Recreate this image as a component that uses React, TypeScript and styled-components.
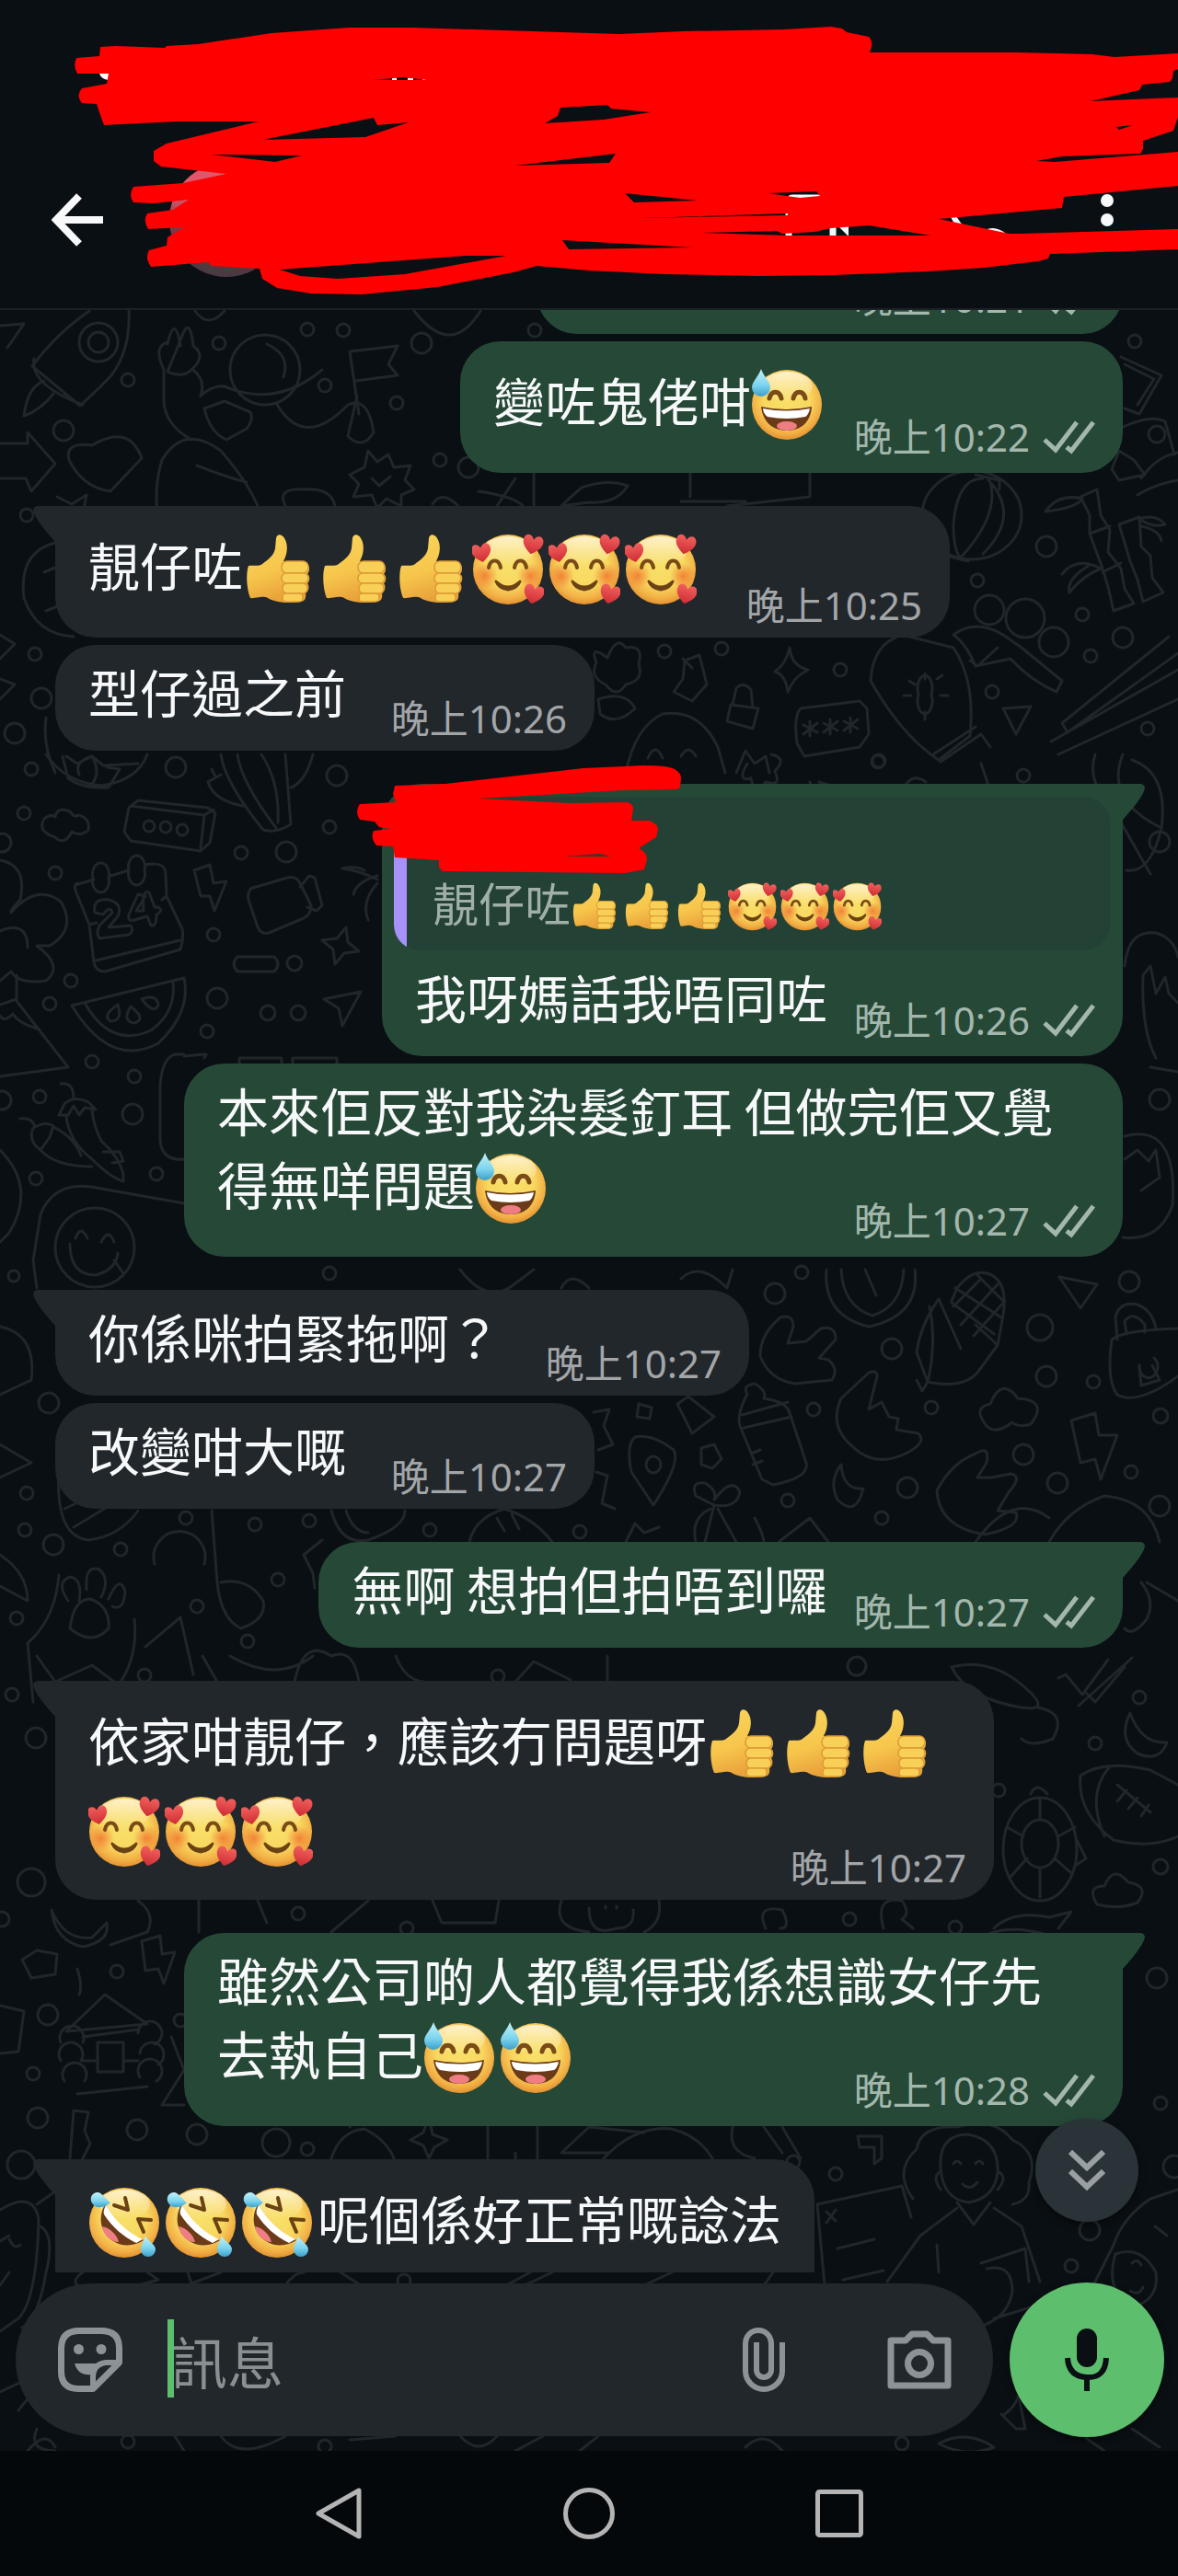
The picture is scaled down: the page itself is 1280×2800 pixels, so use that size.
import React from 'react';
import styled, { createGlobalStyle } from 'styled-components';

const GlobalStyle = createGlobalStyle`
  * { box-sizing: border-box; }
  body { margin: 0; background: #0a0f13; }
  button { border: 0; padding: 0; background: none; color: inherit; display: flex; align-items: center; justify-content: center; }
  svg { display: block; }
`;

const Screen = styled.div`
  height: 100vh;
  display: flex;
  flex-direction: column;
  background: #0a0f13;
  color: #f7f8fa;
  font-family: "Noto Sans CJK TC", "Noto Sans CJK HK", "Noto Sans", sans-serif;
  overflow: hidden;
`;

/* ---------- header ---------- */

const Header = styled.header`
  position: relative;
  flex: none;
  display: flex;
  align-items: center;
  padding: 177px 49px 34px 56px;
  border-bottom: 2px solid #1b2125;
`;

const Avatar = styled.div`
  width: 124px;
  height: 124px;
  margin-left: 72px;
  margin-right: auto;
  border-radius: 50%;
  background: linear-gradient(180deg, #e0566a 0 30%, #8a3a48 50%, #5c3740 75%, #4a3a42 100%);
`;

const HeaderButton = styled.button<{ $gap?: number }>`
  height: 70px;
  margin-left: ${(p) => p.$gap ?? 0}px;
`;

const HeaderScribble = styled.svg`
  position: absolute;
  left: 0;
  top: 0;
  width: 100%;
  height: 335px;
  pointer-events: none;
`;

/* ---------- chat ---------- */

const Chat = styled.main`
  position: relative;
  flex: 1;
  min-height: 0;
  display: flex;
  flex-direction: column;
`;

const Wallpaper = styled.svg`
  position: absolute;
  inset: 0;
  width: 100%;
  height: 100%;
  fill: none;
  stroke: #20262a;
  stroke-width: 3;
  stroke-linecap: round;
  stroke-linejoin: round;
`;

const Viewport = styled.div`
  position: relative;
  flex: 1;
  min-height: 0;
  overflow: hidden;
`;

const MessageList = styled.ol`
  list-style: none;
  margin: -89px 0 0;
  padding: 0 60px;
  display: flex;
  flex-direction: column;
`;

const Bubble = styled.li<{ $out?: boolean; $first?: boolean; $open?: boolean }>`
  position: relative;
  align-self: ${(p) => (p.$out ? 'flex-end' : 'flex-start')};
  max-width: 1020px;
  margin-top: ${(p) => (p.$first ? 36 : 8)}px;
  padding-bottom: ${(p) => (p.$open ? 44 : 0)}px;
  background: ${(p) => (p.$out ? '#264937' : '#22272b')};
  border-radius: ${(p) =>
    !p.$first ? '44px' : p.$out ? '44px 0 44px 44px' : '0 44px 44px 44px'};
  &:first-child { margin-top: 0; }
`;

const Tail = styled.svg<{ $out?: boolean }>`
  position: absolute;
  top: 0;
  ${(p) => (p.$out ? 'left: 100%; margin-left: -1px;' : 'right: 100%; margin-right: -1px; transform: scaleX(-1);')}
  fill: ${(p) => (p.$out ? '#264937' : '#22272b')};
`;

const Body = styled.div`
  display: grid;
  padding: 16px 30px 16px 36px;
`;

const Words = styled.p`
  grid-area: 1 / 1;
  margin: 0 6px 16px 0;
  font-size: 56px;
  line-height: 67px;
`;

/* keeps the last line of text clear of the time stamp */
const Spacer = styled.span<{ $width: number }>`
  display: inline-block;
  height: 1px;
  width: ${(p) => p.$width}px;
`;

const Meta = styled.span<{ $out?: boolean }>`
  grid-area: 1 / 1;
  align-self: end;
  justify-self: end;
  display: flex;
  align-items: center;
  gap: 14px;
  margin-bottom: ${(p) => (p.$out ? 1 : -3)}px;
  font: 42px/44px "Noto Sans", "Noto Sans CJK TC", sans-serif;
  color: ${(p) => (p.$out ? '#a3b7ac' : '#a3a6a9')};
`;

const Quote = styled.blockquote`
  margin: 14px 14px 0 13px;
  height: 167px;
  padding: 84px 28px 0 42px;
  border-radius: 28px;
  background: linear-gradient(to right, #a791fb 14px, #234134 14px);
  font-size: 50px;
  line-height: 60px;
  color: #a0afa7;
`;

const QuoteScribble = styled.svg`
  position: absolute;
  left: -28px;
  top: -20px;
`;

const EmojiBox = styled.span<{ $small?: boolean }>`
  display: inline-flex;
  align-items: center;
  justify-content: flex-start;
  width: ${(p) => (p.$small ? 57 : 83)}px;
  height: ${(p) => (p.$small ? 60 : 95)}px;
  padding-top: ${(p) => (p.$small ? 0 : 10)}px;
  vertical-align: ${(p) => (p.$small ? -10 : -21)}px;
  svg { width: ${(p) => (p.$small ? 53 : 78)}px; height: ${(p) => (p.$small ? 53 : 78)}px; flex: none; }
`;

const ScrollDown = styled.button`
  position: absolute;
  right: 43px;
  bottom: 55px;
  width: 112px;
  height: 112px;
  border-radius: 50%;
  background: #2a3338;
  box-shadow: 0 3px 8px rgba(0, 0, 0, 0.4);
`;

/* ---------- composer ---------- */

const Composer = styled.form`
  position: relative;
  flex: none;
  display: flex;
  align-items: center;
  gap: 18px;
  padding: 11px 15px 15px 17px;
`;

const Field = styled.div`
  position: relative;
  flex: 1;
  min-width: 0;
  height: 166px;
  display: flex;
  align-items: center;
  padding: 0 45px 0 46px;
  border-radius: 83px;
  background: #22272b;
  color: #8c9397;
`;

const Caret = styled.span`
  position: absolute;
  left: 165px;
  top: 39px;
  width: 7px;
  height: 85px;
  background: #5dbf6e;
`;

const TextInput = styled.input`
  flex: 1;
  width: 0;
  min-width: 0;
  height: 90px;
  margin-left: 53px;
  padding: 0;
  border: 0;
  outline: 0;
  background: none;
  color: #f7f8fa;
  font: 61px/88px "Noto Sans CJK TC", sans-serif;
  &::placeholder { color: #8a8f92; opacity: 1; }
`;

const ToolButton = styled.button<{ $gap?: number }>`
  height: 70px;
  margin-left: ${(p) => p.$gap ?? 0}px;
`;

const MicButton = styled.button`
  flex: none;
  width: 168px;
  height: 168px;
  border-radius: 50%;
  background: #5dbf6e;
  box-shadow: 0 3px 8px rgba(0, 0, 0, 0.4);
`;

const SystemNav = styled.nav`
  flex: none;
  height: 136px;
  display: flex;
  align-items: center;
  justify-content: center;
  gap: 216px;
  background: #05080b;
  color: #b4b4b4;
`;

/* ---------- emoji drawings ---------- */

type EmojiName = 'sweat' | 'thumb' | 'love' | 'rofl';

const LABELS: Record<EmojiName, string> = {
  sweat: '😅', thumb: '👍', love: '🥰', rofl: '🤣',
};

const HiddenDefs = styled.svg`
  position: absolute;
`;

const Gradients = () => (
  <HiddenDefs width="0" height="0" aria-hidden="true">
    <defs>
      <radialGradient id="face" cx="50%" cy="42%" r="60%">
        <stop offset="0" stopColor="#f8e06a" />
        <stop offset="0.55" stopColor="#f8d85f" />
        <stop offset="0.82" stopColor="#f2b045" />
        <stop offset="1" stopColor="#e08a2c" />
      </radialGradient>
      <linearGradient id="shine" x1="0" y1="0" x2="0" y2="1">
        <stop offset="0" stopColor="#fff6d8" stopOpacity="0.9" />
        <stop offset="1" stopColor="#fff6d8" stopOpacity="0" />
      </linearGradient>
      <linearGradient id="drop" x1="0" y1="0" x2="0" y2="1">
        <stop offset="0" stopColor="#c4f2fb" />
        <stop offset="0.6" stopColor="#7bd3ee" />
        <stop offset="1" stopColor="#3b9fca" />
      </linearGradient>
      <radialGradient id="blush">
        <stop offset="0" stopColor="#f0702e" stopOpacity="0.8" />
        <stop offset="1" stopColor="#f0702e" stopOpacity="0" />
      </radialGradient>
      <linearGradient id="hand" x1="0" y1="0" x2="0.3" y2="1">
        <stop offset="0" stopColor="#f9d55c" />
        <stop offset="0.6" stopColor="#f7c64c" />
        <stop offset="1" stopColor="#e9a23a" />
      </linearGradient>
      <linearGradient id="heart" x1="0" y1="0" x2="0" y2="1">
        <stop offset="0" stopColor="#f0605c" />
        <stop offset="1" stopColor="#cf2c34" />
      </linearGradient>
    </defs>
  </HiddenDefs>
);

const Face = () => (
  <>
    <circle cx="39" cy="39" r="38" fill="url(#face)" />
    <ellipse cx="39" cy="19" rx="28" ry="16" fill="url(#shine)" />
  </>
);

const Heart = ({ t }: { t: string }) => (
  <path transform={t} d="M0 13C-9 7-14 1-12-6-10-12-3-12 0-5 3-12 10-12 12-6 14 1 9 7 0 13Z" fill="url(#heart)" />
);

const Drawing = ({ name }: { name: EmojiName }) => {
  if (name === 'sweat')
    return (
      <svg viewBox="0 0 78 78">
        <Face />
        <path d="M20 32C22 23 31 23 33 32M46 32C48 23 57 23 59 32" fill="none" stroke="#7a4a17" strokeWidth="5" strokeLinecap="round" />
        <path d="M11 41Q38 47 66 41C65 58 54 67 39 67S13 58 11 41Z" fill="#6b3a18" />
        <path d="M13 43Q38 48 64 43C63 48 61 51 59 52Q39 56 18 52C15 50 13 46 13 43Z" fill="#fff" />
        <ellipse cx="39" cy="62" rx="11" ry="5" fill="#ef7d84" />
        <path d="M11 0C13 7 21 14 21 20A10 10 0 0 1 1 20C1 14 9 7 11 0Z" fill="url(#drop)" />
      </svg>
    );
  if (name === 'love')
    return (
      <svg viewBox="0 0 78 78">
        <Face />
        <circle cx="14" cy="46" r="14" fill="url(#blush)" />
        <circle cx="63" cy="46" r="14" fill="url(#blush)" />
        <path d="M18 37C20 27 29 27 31 37M46 37C48 27 57 27 59 37" fill="none" stroke="#7a4a17" strokeWidth="4" strokeLinecap="round" />
        <path d="M26 52Q39 64 52 52Q49 60 39 61Q29 60 26 52Z" fill="#6b4213" stroke="#6b4213" strokeWidth="3" strokeLinejoin="round" />
        <Heart t="translate(10 20) rotate(-10) scale(.85)" />
        <Heart t="translate(66 11) rotate(12) scale(.88)" />
        <Heart t="translate(67 65) rotate(14) scale(.88)" />
      </svg>
    );
  if (name === 'rofl')
    return (
      <svg viewBox="0 0 78 78">
        <Face />
        <path d="M28 20 43 25 40 12M68 36 54 35 60 49" fill="none" stroke="#6b4213" strokeWidth="4" strokeLinejoin="round" strokeLinecap="round" />
        <path d="M18 19C9 36 15 51 27 59 38 66 51 64 60 58 44 52 30 41 18 19Z" fill="#6b3a18" />
        <path d="M19 20C17 24 16 27 17 30 26 44 38 54 52 61L59 57C45 51 29 38 19 20Z" fill="#fff" />
        <path d="M15 43C23 44 31 52 33 60 24 60 16 52 15 43Z" fill="#ef7d84" />
        <path d="M24 17C18 23 9 24 5 19 0 13 4 6 10 6 15 6 18 13 24 17Z" fill="url(#drop)" />
        <path d="M62 53C64 59 73 62 73 68A8 8 0 0 1 57 68C57 62 61 59 62 53Z" fill="url(#drop)" />
      </svg>
    );
  return (
    <svg viewBox="-4 -1 78 78">
      <path d="M2 34C8 33 13 35 17 32 24 27 30 22 31 15L32 4C33-1 38-1 41 4 45 10 45 20 40 29L60 29C70 31 69 40 66 43 70 46 68 52 66 53 69 57 67 62 64 64 65 69 63 73 58 73 45 75 31 74 23 69 16 66 10 70 4 69 0 60-1 42 2 34Z" fill="url(#hand)" />
      <g fill="#f8d057" stroke="#dc9a35" strokeWidth="1.5">
        <rect x="38" y="29" width="29" height="13" rx="6" />
        <rect x="38" y="42" width="29" height="11" rx="5" />
        <rect x="39" y="53" width="27" height="11" rx="5" />
        <rect x="39" y="64" width="22" height="9" rx="4" />
      </g>
    </svg>
  );
};

const Emoji = ({ name, small }: { name: EmojiName; small?: boolean }) => (
  <EmojiBox $small={small} role="img" aria-label={LABELS[name]}>
    <Drawing name={name} />
  </EmojiBox>
);

/* ---------- messages ---------- */

type Part = string | [EmojiName, number];

interface Message {
  out?: boolean;
  first?: boolean;
  quote?: Part[];
  parts: Part[];
  time?: string;
  space?: number;
}

const MESSAGES: Message[] = [
  { out: true, parts: [], time: '晚上10:21', space: 565 },
  { out: true, parts: ['變咗鬼佬咁', ['sweat', 1]], time: '晚上10:22' },
  { first: true, parts: ['靚仔咗', ['thumb', 3], ['love', 3]], time: '晚上10:25' },
  { parts: ['型仔過之前'], time: '晚上10:26' },
  { out: true, first: true, quote: ['靚仔咗', ['thumb', 3], ['love', 3]], parts: ['我呀媽話我唔同咗'], time: '晚上10:26' },
  { out: true, parts: ['本來佢反對我染髮釘耳 但做完佢又覺得無咩問題', ['sweat', 1]], time: '晚上10:27' },
  { first: true, parts: ['你係咪拍緊拖啊？'], time: '晚上10:27' },
  { parts: ['改變咁大嘅'], time: '晚上10:27' },
  { out: true, first: true, parts: ['無啊 想拍但拍唔到囉'], time: '晚上10:27' },
  { first: true, parts: ['依家咁靚仔，應該冇問題呀', ['thumb', 3], ['love', 3]], time: '晚上10:27' },
  { out: true, first: true, parts: ['雖然公司啲人都覺得我係想識女仔先去執自己', ['sweat', 2]], time: '晚上10:28' },
  { first: true, parts: [['rofl', 3], '呢個係好正常嘅諗法'] },
];

const Parts = ({ parts, small }: { parts: Part[]; small?: boolean }) => (
  <>
    {parts.map((part, i) =>
      typeof part === 'string' ? (
        <React.Fragment key={i}>{part}</React.Fragment>
      ) : (
        Array.from({ length: part[1] }, (_, n) => <Emoji key={`${i}-${n}`} name={part[0]} small={small} />)
      ),
    )}
  </>
);

const Ticks = () => (
  <svg width="57" height="38" viewBox="0 0 57 38" fill="none" stroke="currentColor" strokeWidth="5">
    <path d="M2 22 14 33 37 3M26 30 31 34 55 3" />
  </svg>
);

const MessageItem = ({ m }: { m: Message }) => (
  <Bubble $out={m.out} $first={m.first} $open={!m.time}>
    {m.first && (
      <Tail $out={m.out} width="26" height="39" viewBox="0 0 26 39">
        <path d="M0 0H20Q27 1 24 8Q20 18 1 39H0Z" />
      </Tail>
    )}
    {m.quote && (
      <Quote>
        <Parts parts={m.quote} small />
      </Quote>
    )}
    <Body>
      <Words>
        <Parts parts={m.parts} />
        {m.time && <Spacer $width={m.space ?? (m.out ? 285 : 234)} />}
      </Words>
      {m.time && (
        <Meta $out={m.out}>
          <time>{m.time}</time>
          {m.out && <Ticks />}
        </Meta>
      )}
    </Body>
    {m.quote && (
      <QuoteScribble width="353" height="118" viewBox="387 832 353 118" aria-hidden="true">
        <path
          fill="#fe0000"
          fillRule="evenodd"
          d="M429 854 484 852 634 835 700 832Q725 832 733 836 740 840 740 846L739 856 735 858 676 859 520 868 619 873 682 872Q688 874 688 879L686 892 706 892Q715 896 715 902L713 910 694 922Q703 926 703 934L700 945 679 949 481 947 477 943V935L429 932 427 920 409 919Q402 911 406 903L424 901 412 899 407 893 391 891Q385 882 391 874L430 872 427 863ZM613 931 652 928 664 931Z"
        />
      </QuoteScribble>
    )}
  </Bubble>
);

/* ---------- wallpaper ---------- */

const DOTS: [number, number, number][] = [
  [334, 358, 7], [373, 359, 7], [581, 359, 7], [238, 373, 7], [458, 373, 11], [139, 413, 7], [353, 419, 7], [431, 438, 7],
  [69, 468, 11], [478, 500, 7], [509, 508, 11], [1233, 371, 7], [1257, 472, 9], [1137, 594, 11], [1062, 631, 7], [1075, 663, 16],
  [1114, 672, 21], [1145, 698, 16], [1176, 668, 7], [1220, 693, 11], [1185, 713, 7], [38, 711, 7], [45, 759, 11], [16, 797, 11],
  [722, 708, 7], [784, 705, 7], [913, 728, 7], [1078, 752, 7], [1247, 792, 7], [955, 827, 7], [29, 560, 7],
  [34, 836, 7], [191, 834, 11], [26, 884, 7], [262, 927, 7], [311, 926, 11], [358, 899, 7], [366, 843, 11], [60, 949, 7],
  [232, 1016, 7], [320, 1047, 8], [77, 1066, 7], [54, 1091, 7], [236, 1085, 11], [291, 1101, 8], [324, 1101, 8], [225, 1121, 7],
  [100, 1154, 7], [146, 1170, 7], [43, 1192, 7], [144, 1211, 11], [39, 1281, 7], [170, 1276, 7], [2, 916, 10], [2, 1196, 10],
  [1260, 915, 11], [1260, 1195, 11], [954, 828, 7], [1112, 843, 7],
  [842, 1406, 11], [1130, 1443, 14], [969, 1466, 11], [1137, 1496, 11], [1188, 1502, 7], [1227, 1393, 11], [53, 1525, 11],
  [884, 1532, 7], [1012, 1530, 7], [1261, 1539, 8], [1112, 1581, 11], [986, 1617, 11], [1149, 1612, 11], [1229, 1600, 7],
  [856, 1631, 7], [958, 1650, 7], [1260, 1637, 11], [202, 1650, 7], [277, 1657, 7], [336, 1653, 7], [467, 1663, 7], [630, 1665, 7],
  [29, 1623, 7], [27, 1663, 7], [58, 1679, 11], [131, 1684, 7], [302, 1717, 7], [214, 1746, 7], [18, 1759, 7], [269, 1784, 7],
  [358, 1384, 7], [15, 1387, 6], [871, 1383, 7],
  [13, 1842, 7], [157, 1821, 7], [541, 1822, 7], [931, 1811, 10], [1238, 1845, 7], [39, 1889, 11], [1190, 1895, 7], [1085, 1946, 7],
  [1261, 2029, 8], [34, 2046, 15], [324, 2080, 7], [442, 2096, 7], [923, 2086, 7], [1038, 2095, 7], [2, 2086, 8], [127, 2143, 7],
  [52, 2190, 11], [36, 2254, 7], [41, 2302, 11], [149, 2315, 11], [214, 2320, 11], [1257, 2150, 11], [1261, 2286, 7], [334, 2336, 7],
  [300, 2329, 15], [196, 2196, 7], [23, 2353, 15], [862, 2350, 7], [908, 2363, 7], [1184, 2424, 11], [1164, 2463, 7], [439, 2479, 7],
  [1276, 2355, 12], [139, 2654, 7], [353, 2659, 7], [980, 2656, 7],
];

const DOODLES: string[] = [
  // rocket, cube, astronaut hand and helmet
  'M97 338Q62 362 35 398L87 441Q110 420 121 408Q142 380 140 338M37 390Q32 418 90 440M48 414Q30 420 26 452Q44 446 58 428M128 372A21 21 0 1 1 86 372A21 21 0 1 1 128 372M118 372A11 11 0 1 1 96 372A11 11 0 1 1 118 372',
  'M0 354 26 352 8 378M212 338Q226 358 244 338M450 338Q490 390 522 338M178 402Q166 376 182 372M182 374Q190 340 196 376M196 370Q206 340 210 376Q224 386 210 400Q200 412 182 404ZM178 404 178 430Q176 460 208 478M210 402Q224 414 218 430',
  'M326 402A38 38 0 1 1 250 402A38 38 0 1 1 326 402M290 374Q316 386 308 410M218 430Q232 418 244 420Q300 444 350 402M222 444 244 436 272 448Q276 456 268 466L246 478Q228 470 222 444M300 438Q330 490 378 440Q400 430 406 470Q394 490 378 474L388 430',
  'M380 382 432 376 422 396 432 408 386 414M380 382 390 450',
  'M75 500Q70 480 100 484Q140 460 154 498L120 534Q90 530 75 500M0 482 30 482 30 470 60 504 34 534 28 520 0 520M176 500Q200 460 240 490Q300 560 280 590Q240 610 176 580Q164 540 176 500M214 506Q250 520 268 524',
  'M400 490 410 502 422 494 428 508 446 506 440 522 450 532 436 538 436 550 420 542 410 552 404 538 384 540 390 526 380 516 396 508ZM404 520 412 528 424 518',
  'M62 540 78 548 94 538 90 558M310 550Q300 530 330 532 360 530 364 550M470 548Q480 532 498 550',
  'M520 534Q560 540 568 550M540 550 560 520M580 550V515M610 550Q620 540 632 530 660 520 682 528 670 548 640 546L610 550M750 515V540M790 550 880 540 880 515M740 545H810V550',
  'M1218 388 1262 408 1238 450 1222 444M1222 396 1254 412 1236 440M1218 465Q1250 450 1266 458L1276 494M1216 490 1208 510 1216 522 1244 516 1232 500ZM1240 520Q1256 496 1280 492M1236 538Q1256 526 1280 522',
  'M1110 560A54 48 0 1 1 1002 560A54 48 0 1 1 1110 560M1068 520Q1040 520 1036 570 1036 600 1044 606M1076 524Q1086 560 1044 606M1074 522Q1110 560 1068 602M1060 516 1086 522 1086 532M1028 604 1052 610',
  'M1174 540 1192 532 1196 560 1206 576 1204 600 1218 618 1222 640 1232 656 1210 664 1204 638 1198 618 1184 580 1184 560ZM1136 556Q1150 536 1176 542 1170 552 1136 556M1184 580 1206 572M1198 622 1218 612M1216 570 1238 562 1240 594 1250 604 1252 628 1264 644 1242 654 1236 630 1228 610ZM1238 564Q1256 558 1266 570 1252 574 1238 564M1240 572Q1260 576 1262 588M1154 624Q1170 604 1196 618 1176 626 1162 644 1158 630 1184 614',
  'M60 590Q20 600 26 650 40 690 80 692M48 622 62 616M50 664 70 656M0 690 16 700 0 716M0 738 16 744 0 760M50 780Q46 810 60 840M72 822 84 830 100 822 112 832 150 830',
  'M1036 690Q1060 672 1090 690L1110 704 1154 740 1148 752Q1120 740 1098 716L1060 724Q1050 700 1036 690M1054 718 1062 724 1084 704',
  'M980 690Q948 700 946 740 980 800 1020 826L1054 800Q1060 740 1036 704ZM1014 820 1060 790M1022 828 1066 798 1076 812M1012 755A8 14 0 1 1 998 755A8 14 0 1 1 1012 755M1005 732V738M1005 774V782M982 756H990M1022 756H1030M988 740 994 744M1018 738 1024 734',
  'M1270 692 1154 786 1160 796 1280 710M1142 806 1280 728M1150 820 1280 760M1090 770 1120 768 1104 798Z',
  'M744 718 760 712 768 744 752 762 732 752 742 738ZM742 716 752 726M858 704Q860 724 878 728 862 736 856 752 854 734 842 730 854 722 858 704M796 766 800 748Q808 740 816 750L818 768M794 766 824 770 818 792 790 784Z',
  'M870 770Q862 778 866 808L874 822 934 812 944 798 942 770 934 762ZM880 784V800M873 788 888 796M888 786 873 798M902 782V798M895 786 910 794M910 784 895 796M924 780V796M917 784 932 792M932 782 917 794',
  'M660 715Q640 700 648 720 640 736 658 744 670 760 680 744 700 740 694 722 700 700 680 704 670 690 660 715M650 760Q680 750 690 770 670 790 652 776ZM680 840Q690 790 720 776 760 770 780 812L788 840M704 824Q712 806 720 824M740 822Q748 808 756 822M800 840 810 816 820 830 832 822 836 840',
  // second tier: cloud, box, flowers and calendar
  'M60 910Q40 904 48 890 56 884 60 888 62 876 76 882 82 890 84 886 98 888 96 902 88 910 78 904 70 920 60 910',
  'M140 878 150 870 226 878 234 884 228 916 218 925 142 914 135 904ZM142 876 222 886 232 880M222 886 218 922M168 898A6 6 0 1 1 156 898A6 6 0 1 1 168 898M186 899A6 6 0 1 1 174 899A6 6 0 1 1 186 899M204 902A6 6 0 1 1 192 902A6 6 0 1 1 204 902',
  'M50 820Q70 850 110 854 150 848 160 820M68 822 74 846Q90 858 118 856L130 836 116 834M86 842Q80 828 100 822 110 840 100 852M240 820Q244 850 286 902 300 906 316 896L310 820M258 820Q262 850 300 900M284 820Q304 850 302 894M240 842 226 850Q232 870 264 876M230 836 234 844M340 820Q332 850 316 856',
  'M82 962 102 956M120 952 140 946M158 940Q180 936 180 950L181 974 198 1010Q200 1020 196 1032L114 1056Q104 1056 102 1046L97 1005 82 968Q80 962 84 960M97 1005 105 1003M181 974 176 978M104 1044 196 1022M118 954A9 12 0 1 1 101 954A9 12 0 1 1 118 954M157 946A9 12 0 1 1 140 946A9 12 0 1 1 157 946',
  'M103 992Q100 976 118 978 134 982 128 996L118 1008 142 1006Q146 1012 140 1016L108 1020Q104 1014 108 1006L122 992Q120 984 112 994ZM150 972 140 994Q138 1002 146 1000L160 996 164 1006Q170 1008 170 994 178 990 172 986L168 986 162 970Q154 966 156 990L148 990 158 974Z',
  'M211 946 228 940 232 960 246 958 233 990 228 974 218 974ZM272 966 312 954Q322 952 326 960L338 984Q338 994 330 998L292 1014Q284 1016 280 1008L270 978Q268 968 276 964M326 964 336 952 342 954 350 984 344 990 334 986M258 1040H298Q306 1048 298 1056H258Q250 1048 258 1040M376 1008 378 1024 390 1034 374 1036 364 1048 362 1032 350 1022 366 1020ZM352 1086 392 1078 372 1115 368 1096Z',
  'M78 1093 200 1063Q208 1100 172 1134 120 1162 78 1093M92 1090Q120 1140 164 1120 192 1100 188 1066M128 1092Q110 1104 120 1110 134 1110 128 1092M142 1094Q132 1110 146 1112 160 1108 142 1094M154 1086Q168 1104 172 1092 170 1080 154 1086',
  'M0 935Q30 940 22 978 10 990 12 992 40 960 66 980 84 1010 54 1028H40Q70 1050 50 1066 20 1070 12 1056L0 1066M0 1012Q30 1000 30 1030M18 1060V1088L74 1160 0 1170M18 1086 0 1092M40 1118Q20 1112 14 1102 4 1112 0 1104',
  'M66 1178Q80 1176 80 1194M64 1212 70 1200Q80 1190 96 1198L104 1206 92 1204 86 1212 80 1202 74 1212 64 1212M72 1212Q74 1240 100 1260 120 1280 134 1284 136 1264 110 1240 100 1220 100 1204M22 1216Q34 1214 38 1224M44 1250Q30 1240 36 1226 50 1218 58 1224L54 1236 44 1250Q60 1268 100 1268M60 1226Q80 1236 88 1256M112 1252 130 1252 134 1262 122 1264',
  'M200 1308 110 1292Q60 1280 44 1320L36 1370 40 1400M146 1356A43 43 0 1 1 60 1356A43 43 0 1 1 146 1356M82 1346Q88 1330 95 1346M110 1350Q118 1334 124 1350M76 1352Q76 1386 104 1386 126 1380 128 1362M124 1370 134 1384M0 1250Q40 1290 10 1340L0 1350M200 1146H190Q176 1150 174 1180V1240Q176 1262 200 1260M222 1150 224 1146M200 1148 222 1146',
  'M260 1158V1150H306V1158M318 1158V1150H366V1158M372 944Q384 940 396 946M372 944Q390 946 410 956M384 972Q388 958 410 952M400 1000Q392 980 410 960',
  // right edge
  'M1190 820Q1180 850 1210 880L1250 950M1230 826Q1270 840 1262 900 1250 950 1224 946M1220 820Q1200 870 1262 900M812 830Q800 850 816 846 820 866 832 850 850 856 842 838 856 824 838 820M880 850 890 880 920 870 938 872M890 850Q920 858 938 872M980 860Q990 838 1006 850M1048 870Q1056 850 1080 872L1066 830',
  'M1222 1050Q1226 1010 1256 1014 1276 1020 1280 1040M1256 1150Q1240 1120 1242 1060L1250 1050 1256 1080 1266 1062 1270 1080 1280 1090M1250 1160 1280 1165M1222 1260 1236 1250 1248 1262 1256 1250 1260 1280 1240 1294M1222 1235Q1280 1220 1274 1310 1260 1350 1220 1345',
  // third tier: clock, hands, corn, padlock and bottle
  'M898 1380Q894 1430 944 1442 1000 1430 994 1380M914 1380Q916 1420 948 1430 980 1420 982 1380M940 1380 952 1408M740 1390Q760 1370 790 1400L796 1380M500 1380Q530 1420 560 1395L580 1380M610 1400Q620 1380 640 1400',
  'M1020 1412Q1000 1440 996 1470L1008 1502Q1046 1510 1062 1492L1084 1462 1060 1440M1020 1412 1044 1466M1034 1414 1040 1400Q1056 1380 1072 1384 1096 1390 1090 1430L1084 1462M1038 1400 1088 1432M1062 1386 1090 1414M1034 1416 1080 1450M1084 1396 1044 1440M1092 1414 1058 1452M1066 1390 1036 1420M1010 1420Q1018 1460 1008 1502M1008 1502 1002 1512 996 1500',
  'M1151 1388 1192 1396 1174 1422ZM1214 1456 1212 1432Q1216 1414 1236 1418 1252 1424 1256 1444M1224 1450 1222 1436Q1232 1424 1244 1440V1448M1208 1456Q1220 1446 1280 1444M1208 1456Q1202 1500 1214 1516 1236 1528 1280 1496M1254 1476A10 12 0 1 1 1238 1484L1240 1506 1260 1500 1252 1484',
  'M848 1432Q862 1428 862 1442L856 1460 876 1458 892 1444Q908 1440 908 1456L890 1476 900 1478Q912 1488 904 1500L864 1504Q836 1500 826 1474 826 1450 848 1432M944 1492Q956 1488 952 1500L944 1532 958 1524 966 1540 976 1542 974 1554 998 1558Q1008 1568 984 1580 950 1596 926 1572 900 1550 914 1520ZM1060 1580Q1076 1570 1072 1590L1062 1606 1078 1606 1098 1602Q1112 1604 1096 1622L1084 1642 1104 1644Q1110 1660 1070 1668 1020 1660 1018 1620 1034 1590 1060 1580',
  'M812 1515Q806 1506 820 1504 834 1512 830 1520 856 1524 858 1536L876 1590Q880 1606 840 1614L828 1608 804 1550Q800 1538 812 1515M806 1538 856 1524M808 1552 860 1540M816 1580 826 1576M818 1592 828 1588M690 1562Q708 1558 732 1576 740 1590 710 1636L686 1600Q680 1570 690 1562M718 1592A8 9 0 1 1 702 1592A8 9 0 1 1 718 1592',
  'M1164 1544 1190 1536 1194 1560 1214 1560 1196 1608 1190 1586 1174 1590ZM914 1592Q900 1610 910 1630 930 1650 938 1618 916 1620 914 1592M1072 1550Q1056 1530 1076 1526 1088 1496 1106 1520 1140 1522 1120 1548 1106 1552 1100 1546 1082 1560 1072 1550M762 1574 776 1570 784 1586 774 1596 762 1592ZM694 1526 708 1530 706 1542 692 1540ZM736 1526 748 1518 776 1540 752 1558ZM645 1535 662 1532 656 1550 666 1570 650 1576M648 1600 660 1604 654 1634 668 1640',
  'M756 1626Q750 1610 766 1612 780 1620 776 1630 796 1604 804 1622 800 1640 776 1636ZM776 1636 766 1676M780 1640 800 1676M756 1676Q750 1650 772 1640M820 1650Q836 1680 826 1682M846 1676 880 1650 900 1676M1060 1676Q1100 1620 1140 1650M1140 1676Q1160 1640 1200 1626 1250 1630 1260 1676M680 1676 690 1656 700 1666 716 1660M510 1676Q516 1650 548 1640 580 1650 600 1676M540 1650 548 1664M556 1646 564 1662',
  'M64 1600Q60 1670 96 1674 130 1670 150 1642M70 1640 100 1626M80 1660 120 1636M360 1642Q370 1680 400 1674 440 1660 440 1642M376 1642Q384 1666 400 1666M230 1642 236 1720Q240 1760 262 1770 290 1760 286 1740 270 1714 240 1720M168 1700A28 28 0 1 1 222 1700 210 1736 180 1728 168 1700M180 1700A13 16 0 1 1 206 1700A13 16 0 1 1 180 1700M218 1692 284 1674Q300 1680 290 1692L222 1724M250 1750A13 14 0 1 1 274 1750A13 14 0 1 1 250 1750',
  'M74 1740Q60 1720 76 1714 90 1716 86 1740M94 1728Q92 1700 108 1706 120 1716 110 1736M118 1738Q130 1710 136 1730 134 1752 122 1746M76 1770Q80 1738 98 1738 120 1746 118 1770 100 1790 76 1770M64 1712Q60 1760 30 1786L36 1850M146 1760Q150 1800 130 1830M350 1674 330 1690 340 1710 342 1726M158 1790 196 1758 210 1820M1240 1720Q1256 1740 1246 1760 1230 1780 1222 1770M1246 1720 1280 1740M0 1690Q30 1710 30 1740L0 1724M0 1570 34 1590 0 1606M0 1442Q40 1450 34 1500L0 1516',
  // fourth tier
  'M40 1800 60 1828M60 1828 100 1810 124 1828M220 1800 236 1828M250 1800Q300 1830 340 1800M320 1828Q330 1780 360 1800 384 1790 390 1828M430 1800Q440 1826 460 1828M560 1828 580 1806 620 1826M660 1828V1800M1034 1812Q1080 1800 1120 1840 1140 1860 1110 1856 1050 1846 1034 1812M1128 1856Q1160 1862 1144 1890 1120 1900 1110 1890M1150 1824 1158 1820 1176 1842 1204 1804M1172 1854 1230 1802M1180 1840 1190 1850 1222 1812',
  'M1228 1862Q1214 1890 1236 1906 1260 1916 1268 1894 1240 1896 1228 1862M1174 1930Q1200 1912 1250 1924L1280 1940M1174 1930Q1170 1970 1210 2000 1250 2010 1280 1996M1206 1920Q1180 1950 1200 1996M1214 1940 1250 1970M1214 1958 1224 1946M1226 1966 1236 1954M1240 1974 1248 1962',
  'M1090 2010A40 56 0 1 1 1170 2010A40 56 0 1 1 1090 2010M1110 2004A20 26 0 1 1 1150 2004A20 26 0 1 1 1110 2004M1130 1954V1978M1130 2030V2062M1094 1986 1112 1996M1150 1996 1168 1986M1098 2040 1116 2020M1146 2020 1164 2036M1120 1950Q1126 1936 1138 1950M1170 2000 1180 2020 1168 2028M1192 2070Q1180 2050 1200 2050 1210 2026 1226 2046 1250 2050 1236 2068 1216 2076 1192 2070',
  'M960 2096Q950 2060 980 2066 990 2080 980 2086L992 2096M832 2096Q820 2070 850 2076 860 2096 848 2096M470 2066 480 2090 538 2090 542 2066M610 2066Q600 2096 640 2100M716 2066Q720 2090 700 2100M640 2074Q640 2106 670 2096 690 2096 688 2076M658 2072V2074M670 2072V2074M1080 2096Q1100 2076 1140 2084L1164 2078 1150 2096M1060 2110Q1100 2080 1180 2120M56 2076Q60 2110 90 2116 120 2110 116 2090L100 2106Q70 2110 56 2076M150 2066Q170 2080 160 2100L120 2114M216 2066V2100M280 2066 290 2090M400 2066 360 2100',
  'M24 2130 40 2120 62 2124 60 2146 34 2150ZM154 2110 174 2104 176 2124 190 2122 178 2156 172 2140 158 2142ZM84 2140Q90 2160 86 2168M72 2208 114 2168 160 2200 72 2208M66 2220A13 13 0 1 1 90 2220M66 2240A13 13 0 1 1 88 2240M70 2262A13 13 0 1 1 92 2262M150 2210A13 13 0 1 1 168 2222M152 2232A13 13 0 1 1 172 2244M152 2258A13 13 0 1 1 170 2262M106 2220H134V2252H106ZM90 2214 150 2206M90 2240H106M134 2240H150M84 2276 160 2268M0 2180 26 2186 20 2230 0 2232M186 2214 200 2250 176 2288H200',
  'M80 2294 96 2296 92 2316 98 2330 90 2346M80 2294 76 2346M360 2346Q370 2316 396 2314 420 2326 428 2346M380 2312 384 2300M374 2306 392 2302M466 2300 470 2320 486 2326 472 2334 466 2346 460 2332 446 2326 460 2318ZM530 2312V2346M584 2312V2346M610 2340 640 2312 700 2318M610 2340H660M656 2346Q690 2310 730 2314 760 2322 774 2346M796 2312Q790 2340 820 2346M830 2312 850 2340M850 2312 870 2346M932 2322H958V2346L950 2352V2334H934ZM560 2340V2346',
  // portrait, notebook, bottom strip
  'M992 2390Q970 2360 996 2336 1000 2310 1040 2312 1080 2300 1100 2326 1130 2340 1118 2372 1120 2392 1100 2396M1022 2356Q1020 2320 1052 2320 1086 2326 1084 2362 1080 2390 1052 2394 1024 2390 1022 2356M1036 2352Q1040 2346 1044 2352M1060 2352Q1064 2346 1068 2352M1046 2374Q1054 2382 1062 2372M1022 2360Q1012 2366 1022 2380M1084 2360Q1096 2366 1084 2380M1040 2394 1058 2418 1076 2394M1040 2400 1000 2430 964 2480M1080 2400 1110 2420 1130 2480M1018 2440 1020 2470M1066 2460 1114 2444 1118 2480',
  'M888 2396 980 2376M888 2396 896 2484M898 2404 908 2414M908 2402 898 2416M910 2444 950 2434M916 2478 960 2468M980 2376 990 2410M1072 2466Q1100 2460 1100 2490 1096 2520 1062 2530M1210 2440Q1220 2410 1250 2390 1280 2380 1280 2380M1212 2450Q1240 2440 1256 2470 1260 2500 1230 2508 1200 2490 1212 2450M1230 2460Q1236 2454 1240 2462M1228 2490Q1238 2496 1242 2486M1255 2420 1268 2430M1190 2480 1210 2440M1080 2520 1130 2505',
  'M0 2402Q36 2380 42 2412 40 2500 20 2520L0 2534M44 2420Q60 2430 50 2470 42 2520 24 2530M0 2436 10 2430M10 2434Q16 2446 22 2440M0 2484 10 2470M40 2396 60 2382M90 2470Q70 2484 100 2490M160 2470 172 2478 150 2484M204 2470 208 2482 240 2470M310 2484Q320 2470 330 2470M370 2470 392 2484M550 2484 576 2470M570 2484 600 2470M700 2484 730 2470M830 2484 840 2470M0 2600 30 2586 36 2600 20 2620M1092 2624Q1110 2610 1106 2594M1106 2600 1114 2640 1104 2640 1088 2624M1230 2640 1260 2660M1180 2650 1200 2664M40 2640Q30 2664 60 2664M30 2664Q50 2640 60 2660M190 2648 200 2664M240 2648Q260 2676 310 2648M380 2652 430 2648M500 2648Q520 2670 540 2648M590 2648 560 2664M630 2664 650 2648M810 2660Q830 2640 850 2664M1020 2656Q1050 2640 1080 2660 1050 2672 1020 2656',
];

/* ---------- page ---------- */

export default function App() {
  return (
    <Screen>
      <GlobalStyle />
      <Gradients />
      <Header>
        <HeaderButton aria-label="返回">
          <svg width="56" height="58" viewBox="0 0 56 58" fill="none" stroke="currentColor" strokeWidth="8">
            <path d="M30 3 5 29 30 55M5 29H56" />
          </svg>
        </HeaderButton>
        <Avatar />
        <HeaderButton aria-label="視像通話">
          <svg width="70" height="56" viewBox="0 0 70 56" fill="none" stroke="currentColor" strokeWidth="7">
            <rect x="4" y="4" width="48" height="48" rx="4" />
            <path d="M57 34 69 22V46Z" fill="currentColor" stroke="none" />
          </svg>
        </HeaderButton>
        <HeaderButton aria-label="語音通話" $gap={107}>
          <svg width="70" height="56" viewBox="0 0 70 56" fill="none" stroke="currentColor" strokeWidth="6">
            <path d="M3 16Q6 28 16 38M34 47Q48 34 62 46" />
          </svg>
        </HeaderButton>
        <HeaderButton aria-label="更多選項" $gap={75}>
          <svg width="56" height="56" viewBox="0 0 56 56" fill="currentColor">
            <circle cx="28" cy="7" r="7" />
            <circle cx="28" cy="28" r="7" />
            <circle cx="28" cy="49" r="7" />
          </svg>
        </HeaderButton>
        <HeaderScribble viewBox="0 0 1280 335" preserveAspectRatio="none" aria-hidden="true">
          <path d="M108 80Q110 86 118 87L120 78Z" fill="#fff" />
          <path d="M426 86H431M443 86H449M459 87H463" stroke="#fff" strokeWidth="3" />
          <path
            fill="#fe0000"
            fillRule="evenodd"
            d="M84 80Q79 72 83 63L108 61 109 51 126 50 179 52 181 50 215 48 295 36 379 30H448L673 37 742 34 852 32 903 29 915 31 920 35 944 40Q950 46 945 57L1105 57 1187 59 1211 62 1280 58V75L1275 77 1274 85 1271 89 1241 92 1238 98 1185 110 1280 106V127L1278 133 1275 142 1242 153V162L1239 167 1154 170 1126 175 1146 176 1280 165V202L1156 214 1154 226 1020 238 1097 254H1109L1280 249V271L1141 276 1139 281 1128 284 1069 291 1007 295 905 299 824 300 722 298 640 294 583 289 558 296 475 312 393 320 338 319 301 313 285 303 282 292 230 289 226 285 164 290Q157 280 162 272L181 267 182 258 200 247 161 249Q155 240 160 232L188 228 205 217 167 221 145 220Q139 212 145 203L199 199 246 189 175 181 167 175V164L181 156 281 132H191L113 136 109 125 105 113 89 112Q82 104 89 96L116 91 118 80ZM285 152 406 128 410 136 444 133 397 149ZM230 168 328 169 299 176ZM592 134 606 126 609 117 660 114 664 118 707 122 656 130ZM559 180 669 167 662 177ZM304 293 505 278H550L440 298 367 303 326 300ZM611 261 752 269 618 271ZM679 210 758 218 689 220ZM834 210 887 208 891 213 869 215ZM697 237 856 232V234ZM762 253 844 251 850 254 885 252 903 248 944 245 1011 256H856ZM1213 138 1231 136 1216 141ZM405 87 438 84 464 87Z"
          />
        </HeaderScribble>
      </Header>

      <Chat>
        <Wallpaper viewBox="0 337 1280 2327" preserveAspectRatio="xMidYMin slice" aria-hidden="true">
          {DOODLES.map((d, i) => (
            <path key={i} d={d} />
          ))}
          {DOTS.map(([x, y, r], i) => (
            <circle key={i} cx={x} cy={y} r={r} />
          ))}
        </Wallpaper>
        <Viewport>
          <MessageList>
            {MESSAGES.map((m, i) => (
              <MessageItem key={i} m={m} />
            ))}
          </MessageList>
          <ScrollDown aria-label="捲動至最新訊息">
            <svg width="40" height="46" viewBox="0 0 40 46" fill="none" stroke="#9a9fa3" strokeWidth="6">
              <path d="M2 3 20 20 38 3M2 24 20 41 38 24" />
            </svg>
          </ScrollDown>
        </Viewport>
        <Composer>
          <Field>
            <ToolButton type="button" aria-label="貼圖">
              <svg width="70" height="70" viewBox="0 0 70 70" fill="none" stroke="currentColor" strokeWidth="7">
                <path d="M22 3.500H48Q66.500 4 66.500 22V38L38 66.500H22Q3.500 66 3.500 48V22Q4 4 22 3.500Z" strokeLinejoin="round" />
                <path d="M66 38H52Q38 40 38 54V66" strokeWidth="6" />
                <path d="M18 39H44Q38 43 37 51Q22 53 18 39Z" fill="currentColor" stroke="none" />
                <circle cx="22.500" cy="23.500" r="5.500" fill="currentColor" stroke="none" />
                <circle cx="47" cy="23.500" r="5.500" fill="currentColor" stroke="none" />
              </svg>
            </ToolButton>
            <TextInput aria-label="訊息" placeholder="訊息" />
            <Caret />
            <ToolButton type="button" aria-label="附加檔案">
              <svg width="46" height="70" viewBox="0 0 46 70" fill="none" stroke="currentColor" strokeWidth="6">
                <path d="M43 16V47A20 20 0 0 1 3 47V17A14 14 0 0 1 31 17V46A8 8 0 0 1 15 46V16" />
              </svg>
            </ToolButton>
            <ToolButton type="button" aria-label="相機" $gap={111}>
              <svg width="70" height="64" viewBox="0 0 70 64" fill="none" stroke="currentColor" strokeWidth="7">
                <path d="M4 11H20L27 4H43L50 11H66V60H4Z" strokeLinejoin="round" />
                <circle cx="35" cy="36" r="12.500" />
              </svg>
            </ToolButton>
          </Field>
          <MicButton type="button" aria-label="語音訊息">
            <svg width="50" height="68" viewBox="0 0 50 68" fill="none" stroke="#0a0f13" strokeWidth="6">
              <rect x="14" y="0" width="22" height="42" rx="11" fill="#0a0f13" stroke="none" />
              <path d="M4 32Q5 52 25 53T46 32M25 53V68" />
            </svg>
          </MicButton>
        </Composer>
      </Chat>

      <SystemNav>
        <button aria-label="返回">
          <svg width="56" height="56" viewBox="0 0 56 56" fill="none" stroke="currentColor" strokeWidth="5" strokeLinejoin="round">
            <path d="M50 3V53L6 28Z" />
          </svg>
        </button>
        <button aria-label="主畫面">
          <svg width="56" height="56" viewBox="0 0 56 56" fill="none" stroke="currentColor" strokeWidth="5">
            <circle cx="28" cy="28" r="25.500" />
          </svg>
        </button>
        <button aria-label="最近使用">
          <svg width="56" height="56" viewBox="0 0 56 56" fill="none" stroke="currentColor" strokeWidth="5">
            <rect x="4.500" y="4.500" width="47" height="47" rx="2" />
          </svg>
        </button>
      </SystemNav>
    </Screen>
  );
}
